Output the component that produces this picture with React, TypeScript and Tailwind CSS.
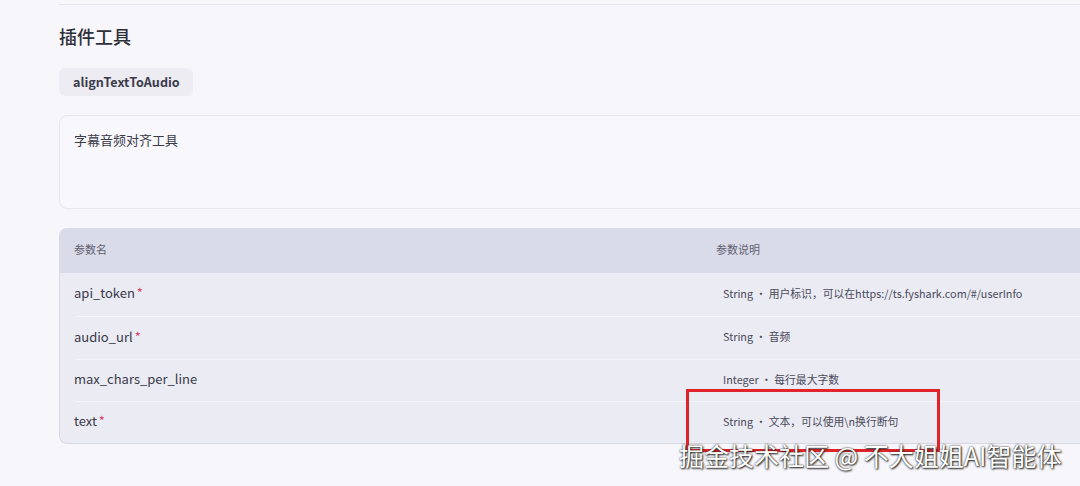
const params = [
  { name: "api_token", required: true, type: "String", desc: "用户标识，可以在https://ts.fyshark.com/#/userInfo", h: "h-[43px]" },
  { name: "audio_url", required: true, type: "String", desc: "音频", h: "h-[43px]" },
  { name: "max_chars_per_line", required: false, type: "Integer", desc: "每行最大字数", h: "h-[42px]" },
  { name: "text", required: true, type: "String", desc: "文本，可以使用\\n换行断句", h: "h-[42px]" },
];

export default function App() {
  return (
    <div
      className="relative w-[1080px] h-[486px] overflow-hidden bg-[#f7f7fb] text-[#33334a]"
      style={{ fontFamily: '"Noto Sans CJK SC", "Noto Sans", sans-serif' }}
    >
      <div className="w-[1140px] pl-[59px]">
        {/* bottom edge of the previous card */}
        <div className="h-[5px] border-b border-[#e6e6ee] bg-[#f8f8fb]" />

        <h2 className="mt-[19px] h-[24px] text-[18px] leading-[24px] font-medium text-[#2f2f3a]">插件工具</h2>

        <div className="mt-[20px] inline-flex h-[28px] items-center rounded-md bg-[#ececf2] pl-[14px] pr-[13px] text-[12.6px] font-semibold text-[#3b3b4c]">
          alignTextToAudio
        </div>

        <div className="mt-[19px] h-[94px] rounded-lg border border-[#e6e6ee] bg-[#f8f8fc] px-[14px] pt-[14px] text-[13px] leading-[20px] text-[#3a3a48]">
          字幕音频对齐工具
        </div>

        <div className="mt-[19px] overflow-hidden rounded-lg border-l border-b border-[#d8d8e2] bg-[#ebebf3]">
          <div className="flex h-[45px] items-center bg-[#d9dbe8] pb-[2px] text-[11px] text-[#5f6070]">
            <div className="w-[641px] pl-[14px]">参数名</div>
            <div className="pl-[15px]">参数说明</div>
          </div>
          {params.map((p, i) => (
            <div key={p.name} className={`flex items-center pb-[3px] ${p.h} ${i > 0 ? "border-t border-[#f5f5f9] ml-[16px]" : ""}`}>
              <div className={`${i > 0 ? "w-[625px] -ml-[2px]" : "w-[641px] pl-[14px]"} text-[13px] text-[#3a3a4a]`}>
                {p.name}
                {p.required && <span className="ml-[2px] text-[#e0436a]">*</span>}
              </div>
              <div className={`${i > 0 ? "pl-[24px]" : "pl-[22px]"} text-[10.8px] text-[#4a4a5a]`}>
                {p.type} · {p.desc}
              </div>
            </div>
          ))}
        </div>
      </div>

      {/* highlight box */}
      <div className="absolute left-[686px] top-[389px] h-[63px] w-[254px] border-[3px] border-[#e0242a]" />

      {/* watermark */}
      <div className="absolute left-[679px] top-[438px] text-[25px] leading-[34px] text-white [text-shadow:0_0_2px_#222,1px_1px_2px_#222]">
        掘金技术社区 @ 不大姐姐AI智能体
      </div>
    </div>
  );
}
